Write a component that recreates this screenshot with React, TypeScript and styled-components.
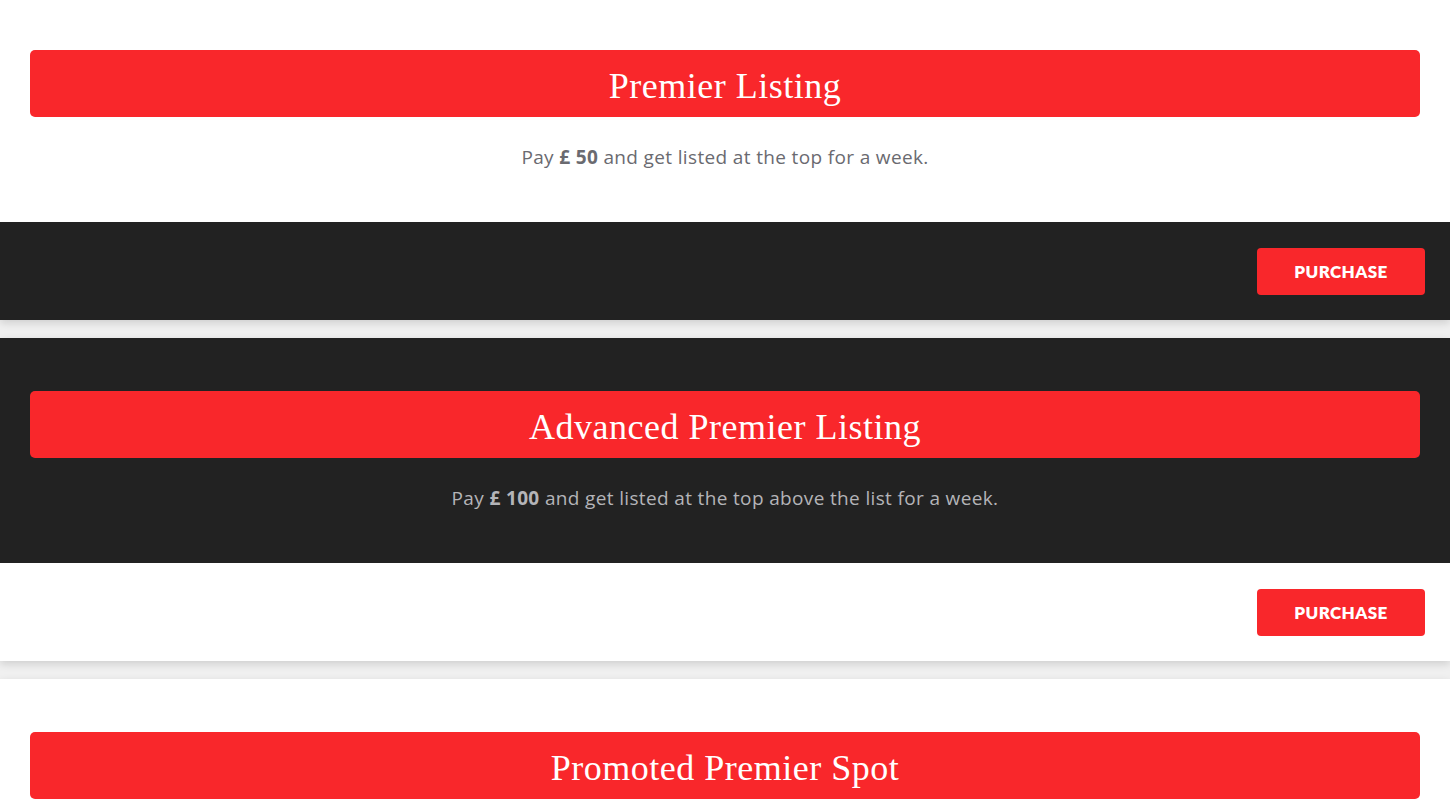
import React from "react";
import styled, { createGlobalStyle } from "styled-components";

const Global = createGlobalStyle`
  html, body { margin: 0; padding: 0; background: #f0f0f0; }
  body { font-family: "Open Sans", "Lato", sans-serif; overflow: hidden; }
`;

const List = styled.div`
  display: flex;
  flex-direction: column;
  gap: 18px;
  margin-top: -3px;
`;

const Card = styled.section`
  display: flex;
  flex-direction: column;
  box-shadow: 0 3px 8px rgba(0, 0, 0, 0.14);
`;

const Body = styled.div<{ $dark: boolean }>`
  background: ${(p) => (p.$dark ? "#222222" : "#ffffff")};
  padding: 53px 30px 52px;
  display: flex;
  flex-direction: column;
  align-items: stretch;
`;

const Title = styled.h2`
  margin: 0;
  height: 67px;
  display: flex;
  align-items: center;
  justify-content: center;
  background: #f9272b;
  border-radius: 5px;
  color: #ffffff;
  font-family: "Liberation Serif", "DejaVu Serif", serif;
  font-weight: 400;
  font-size: 36px;
  letter-spacing: 0.5px;
  padding-top: 4px;
  box-sizing: border-box;
`;

const Desc = styled.p<{ $dark: boolean }>`
  margin: 27px 0 0;
  line-height: 26px;
  text-align: center;
  font-size: 19px;
  letter-spacing: 0.35px;
  color: ${(p) => (p.$dark ? "#b4b4b8" : "#6a6a70")};
  b { font-weight: 700; }
`;

const Footer = styled.div<{ $dark: boolean }>`
  background: ${(p) => (p.$dark ? "#222222" : "#ffffff")};
  height: 98px;
  display: flex;
  align-items: center;
  justify-content: flex-end;
  padding: 0 25px;
  box-sizing: border-box;
`;

const Button = styled.button`
  width: 168px;
  height: 47px;
  border: none;
  border-radius: 4px;
  background: #f9272b;
  color: #ffffff;
  font-family: "Lato", sans-serif;
  font-weight: 800;
  font-size: 17px;
  letter-spacing: 0.4px;
  text-transform: uppercase;
  cursor: pointer;
`;

const items = [
  { title: "Premier Listing", price: "£ 50", rest: "and get listed at the top for a week.", dark: false },
  { title: "Advanced Premier Listing", price: "£ 100", rest: "and get listed at the top above the list for a week.", dark: true },
  { title: "Promoted Premier Spot", price: "£ 150", rest: "and get promoted on the home page for a week.", dark: false },
];

export default function App() {
  return (
    <>
      <Global />
      <List>
        {items.map((it) => (
          <Card key={it.title}>
            <Body $dark={it.dark}>
              <Title>{it.title}</Title>
              <Desc $dark={it.dark}>
                Pay <b>{it.price}</b> {it.rest}
              </Desc>
            </Body>
            <Footer $dark={!it.dark}>
              <Button>Purchase</Button>
            </Footer>
          </Card>
        ))}
      </List>
    </>
  );
}
